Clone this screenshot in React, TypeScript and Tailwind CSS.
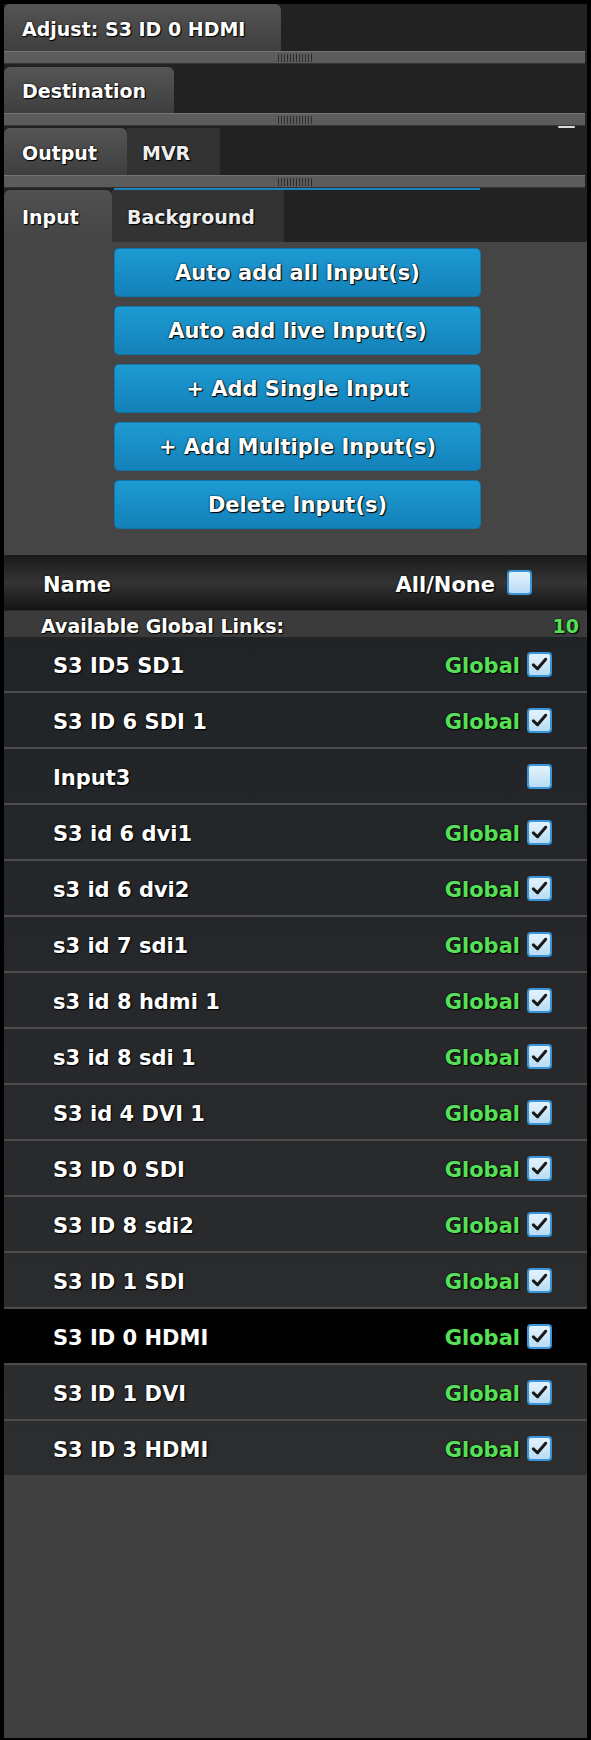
import type { ReactNode } from "react";

const font = "font-['DejaVu_Sans','Liberation_Sans',sans-serif]";
const shadow = "[text-shadow:0_0_2px_#000,1px_1px_1px_#000]";

const inputs = [
  { name: "S3 ID5 SD1", global: true },
  { name: "S3 ID 6 SDI 1", global: true },
  { name: "Input3", global: false },
  { name: "S3 id 6 dvi1", global: true },
  { name: "s3 id 6 dvi2", global: true },
  { name: "s3 id 7 sdi1", global: true },
  { name: "s3 id 8 hdmi 1", global: true },
  { name: "s3 id 8 sdi 1", global: true },
  { name: "S3 id 4 DVI 1", global: true },
  { name: "S3 ID 0 SDI", global: true },
  { name: "S3 ID 8 sdi2", global: true },
  { name: "S3 ID 1 SDI", global: true },
  { name: "S3 ID 0 HDMI", global: true, selected: true },
  { name: "S3 ID 1 DVI", global: true },
  { name: "S3 ID 3 HDMI", global: true },
];

const actions = [
  "Auto add all Input(s)",
  "Auto add live Input(s)",
  "+ Add Single Input",
  "+ Add Multiple Input(s)",
  "Delete Input(s)",
];

function Checkbox({ checked }: { checked?: boolean }) {
  return (
    <span className="flex h-[25px] w-[25px] items-center justify-center rounded-[4px] border-2 border-[#3a94d8] bg-gradient-to-b from-[#e4f3fd] to-[#b9dcf4]">
      {checked && (
        <svg viewBox="0 0 20 20" className="h-[19px] w-[19px]">
          <path d="M3.5 10.5 L8 14.5 L16.5 4.5" fill="none" stroke="#1a1a1a" strokeWidth="3.2" strokeLinecap="round" strokeLinejoin="round" />
        </svg>
      )}
    </span>
  );
}

function Splitter({ children }: { children?: ReactNode }) {
  return (
    <div className="relative mr-[2px] h-[13px] border-t border-b border-t-[#747474] border-b-[#333] bg-[#5c5c5c]">
      <div className="absolute left-1/2 top-[2px] flex h-[8px] -translate-x-1/2 gap-[2px]">
        {Array.from({ length: 12 }).map((_, i) => (
          <span key={i} className="h-full w-px bg-[#2c2c2c]" />
        ))}
      </div>
      {children}
    </div>
  );
}

function Tab({ label, active, className }: { label: string; active?: boolean; className: string }) {
  return (
    <div
      className={`flex items-center pl-[18px] text-[19px] font-bold text-white ${shadow} ${className} ${
        active ? "rounded-t-[6px] bg-gradient-to-b from-[#555] to-[#3e3e3e]" : "bg-[#333]"
      }`}
    >
      <span className="mt-[3px]">{label}</span>
    </div>
  );
}

export default function App() {
  return (
    <div className={`flex h-[1740px] w-[591px] flex-col bg-black pl-[4px] pr-[4px] pt-[4px] pb-[2px] ${font}`}>
      <div className="flex flex-1 flex-col bg-[#222]">
        {/* adjust header */}
        <div className="flex h-[47px] items-end">
          <Tab label="Adjust: S3 ID 0 HDMI" active className="h-[47px] w-[277px]" />
        </div>
        <Splitter />

        <div className="flex h-[49px] items-end">
          <Tab label="Destination" active className="h-[46px] w-[170px]" />
        </div>
        <Splitter>
          <span className="absolute right-[10px] top-[12px] h-[2px] w-[17px] rounded-full bg-[#ddd]" />
        </Splitter>

        <div className="flex h-[49px] items-end">
          <Tab label="Output" active className="h-[47px] w-[123px]" />
          <div className="flex h-[47px] w-[93px] items-center bg-[#333] pl-[15px] text-[19px] font-bold text-[#eee]">
            <span className={`mt-[3px] ${shadow}`}>MVR</span>
          </div>
        </div>
        <Splitter>
          <span className="absolute left-[110px] top-[12px] h-[2px] w-[366px] bg-[#1a86bf]" />
        </Splitter>

        <div className="flex h-[54px] items-end">
          <Tab label="Input" active className="h-[52px] w-[108px] bg-gradient-to-b from-[#505050] to-[#454545]" />
          <div className="flex h-[52px] w-[172px] items-center bg-[#333] pl-[15px] text-[19px] font-bold text-[#eee]">
            <span className={`mt-[3px] ${shadow}`}>Background</span>
          </div>
        </div>

        {/* input actions */}
        <div className="flex flex-col gap-[9px] bg-[#454545] pt-[6px] pb-[26px] pl-[110px]">
          {actions.map((a) => (
            <button
              key={a}
              className={`flex h-[49px] w-[367px] items-center justify-center rounded-[5px] border border-[#0f77ad] bg-gradient-to-b from-[#1d9bd2] to-[#1481b9] text-[21px] font-bold text-white ${shadow}`}
            >
              <span className="mt-[3px]">{a}</span>
            </button>
          ))}
        </div>

        {/* list header */}
        <div className="flex h-[55px] items-center justify-between bg-gradient-to-b from-[#1a1a1a] via-[#343434] to-[#141414] pl-[39px] pr-[55px] text-[21px] font-bold text-white">
          <span className={`mt-[6px] ${shadow}`}>Name</span>
          <span className="flex items-center gap-[12px]">
            <span className={`mt-[6px] ${shadow}`}>All/None</span>
            <Checkbox />
          </span>
        </div>
        <div className="flex h-[27px] items-center justify-between border-t border-[#2a2a2a] bg-[#3b3b3b] pl-[37px] pr-[8px] text-[19px] font-bold">
          <span className={`mt-[4px] text-white ${shadow}`}>Available Global Links:</span>
          <span className={`mt-[4px] text-[#55e055] ${shadow}`}>10</span>
        </div>

        <div className="flex flex-col bg-gradient-to-b from-[#212427] to-[#2c2d2f]">
          {inputs.map((row, i) => (
            <div
              key={row.name}
              className={`flex h-[54px] items-center justify-between pl-[49px] pr-[35px] ${
                i > 0 ? "box-content border-t-2 border-[#4c4c4c]" : ""
              } ${row.selected ? "bg-black" : ""}`}
            >
              <span className={`mt-[5px] text-[21px] font-bold text-white ${shadow}`}>{row.name}</span>
              <span className="flex items-center gap-[7px]">
                {row.global && (
                  <span className={`mt-[5px] text-[21px] font-bold text-[#55e055] ${shadow}`}>Global</span>
                )}
                <Checkbox checked={row.global} />
              </span>
            </div>
          ))}
        </div>

        <div className="flex-1 bg-[#404040]" />
      </div>
    </div>
  );
}
